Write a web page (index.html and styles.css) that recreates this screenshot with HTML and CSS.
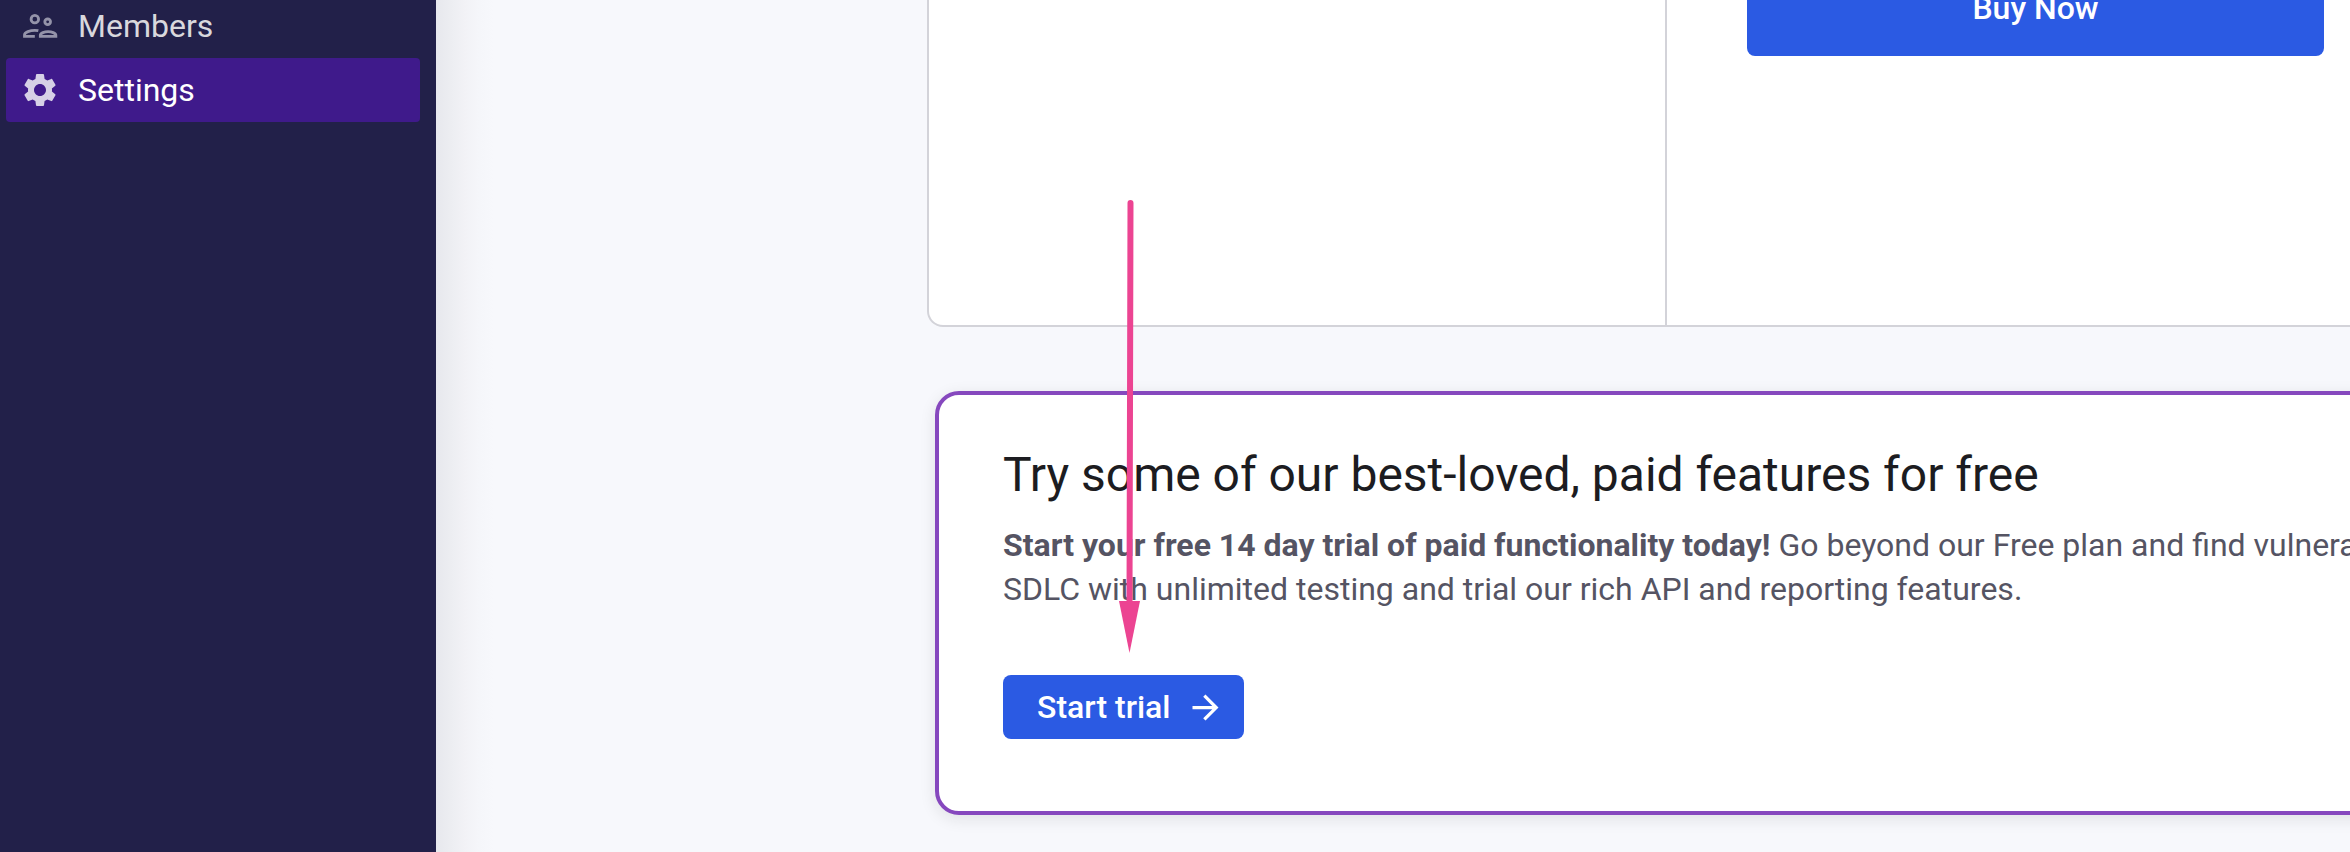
FILE: index.html
```html
<!DOCTYPE html>
<html lang="en">
<head>
<meta charset="utf-8">
<title>Settings</title>
<link rel="stylesheet" href="styles.css">
</head>
<body>
<div class="app">
  <nav class="sidebar">
    <a class="nav-item nav-item-muted">
      <svg class="nav-icon" viewBox="0 0 24 24" fill="none" stroke="currentColor" stroke-width="1.7"><circle cx="8.9" cy="7.9" r="2.25"/><circle cx="16.6" cy="9.5" r="1.7"/><path d="M8.900 18.200H2.700v-.9c0-1.600 3.400-2.700 6.200-2.700.7 0 1.400 0 2.100.15M12.200 18.200h9.300v-.7c0-1.300-2.600-2.100-4.650-2.100s-4.650.8-4.650 2.100z"/></svg>
      <span>Members</span>
    </a>
    <a class="nav-item nav-item-active">
      <svg class="nav-icon" viewBox="0 0 24 24" fill="currentColor"><path d="M19.14 12.94c.04-.3.06-.61.06-.94 0-.32-.02-.64-.07-.94l2.030-1.580c.18-.14.23-.41.12-.61l-1.920-3.320c-.12-.22-.37-.29-.59-.22l-2.390.96c-.5-.38-1.030-.7-1.620-.94l-.36-2.540c-.04-.24-.24-.41-.48-.41h-3.840c-.24 0-.43.17-.47.41l-.36 2.540c-.59.24-1.130.57-1.620.94l-2.390-.96c-.22-.08-.47 0-.59.22L2.740 8.870c-.12.21-.08.47.12.61l2.030 1.580c-.05.3-.09.63-.09.94s.02.64.07.94l-2.030 1.580c-.18.14-.23.41-.12.61l1.920 3.320c.12.22.37.29.59.22l2.390-.96c.5.38 1.030.7 1.620.94l.36 2.540c.05.24.24.41.48.41h3.840c.24 0 .44-.17.47-.41l.36-2.540c.59-.24 1.130-.56 1.620-.94l2.390.96c.22.08.47 0 .59-.22l1.920-3.320c.12-.22.07-.47-.12-.61l-2.010-1.580zM12 15.600c-1.980 0-3.600-1.620-3.600-3.600s1.620-3.600 3.600-3.600 3.600 1.620 3.600 3.600-1.620 3.600-3.600 3.600z"/></svg>
      <span>Settings</span>
    </a>
  </nav>
  <main class="content">
    <section class="plans">
      <div class="plan"></div>
      <div class="plan plan-paid"><button class="button buy">Buy Now</button></div>
    </section>
    <section class="trial">
      <h2 class="trial-title">Try some of our best-loved, paid features for free</h2>
      <p class="trial-text"><strong>Start your free 14 day trial of paid functionality today!</strong> Go beyond our Free plan and find vulnerabilities<br>SDLC with unlimited testing and trial our rich API and reporting features.</p>
      <button class="button start">Start trial
        <svg class="button-icon" viewBox="0 0 24 24" fill="currentColor"><path d="M12 4l-1.410 1.410L16.170 11H4v2h12.170l-5.580 5.590L12 20l8-8z"/></svg>
      </button>
    </section>
  </main>
  <svg class="pointer" viewBox="0 0 24 456"><path d="M12.500 5L11.500 405" stroke="#ec4492" stroke-width="6" stroke-linecap="round"/><path d="M1 403h21l-10.500 52z" fill="#ec4492"/></svg>
</div>
</body>
</html>
```
FILE: styles.css
```css
* { box-sizing: border-box; }
body { margin: 0; font-family: Roboto, "Liberation Sans", sans-serif; background: #f7f8fc; }
.app { position: relative; display: flex; width: 2350px; height: 852px; overflow: hidden; }
.sidebar { flex: none; width: 436px; padding: 0 16px 0 6px; background: #222049; }
.nav-item { display: flex; align-items: center; gap: 18px; height: 64px; padding-left: 14px; border-radius: 4px; font-size: 32px; color: #fff; }
.nav-item-muted { margin-top: -6px; color: #d9d8dd; }
.nav-item-active { background: #3f1a8b; }
.nav-icon { width: 40px; height: 40px; color: #d6d0e6; }
.nav-item-muted .nav-icon { color: #9493a9; }
.content { flex: none; width: 2200px; background: linear-gradient(90deg, #e7e8ed 0, #edeef2 17px, #f2f2f6 29px, #f5f6fa 43px, #f7f8fc 58px); }
.plans { display: flex; height: 327px; margin-left: 491px; background: #fff; border: 2px solid #d3d3d9; border-top: 0; border-radius: 0 0 16px 16px; }
.plan { flex: none; width: 736px; }
.plan-paid { flex: 1; padding-left: 80px; border-left: 2px solid #d3d3d9; }
.button { display: flex; align-items: center; justify-content: center; height: 64px; border: 0; border-radius: 8px; background: #2b5ae3; color: #fff; font: 500 32px/1 Roboto, "Liberation Sans", sans-serif; }
.buy { width: 577px; height: 96px; margin-top: -40px; }
.trial { height: 424px; margin: 64px 0 0 499px; padding: 52px 64px; background: #fff; border: 4px solid #8648be; border-radius: 24px; box-shadow: 0 4px 16px rgba(28, 28, 33, .1); }
.trial-title { margin: 0; font-size: 48px; font-weight: 400; line-height: 56px; letter-spacing: -.02px; color: #1c1c21; }
.trial-text { margin: 20px 0 0; font-size: 32px; line-height: 44px; color: #555463; white-space: nowrap; }
.start { justify-content: flex-start; width: 241px; margin-top: 64px; padding: 0 0 0 34px; gap: 15px; }
.button-icon { width: 39px; height: 39px; }
.pointer { position: absolute; left: 1118px; top: 198px; width: 24px; height: 456px; z-index: 2; fill: none; }
```
